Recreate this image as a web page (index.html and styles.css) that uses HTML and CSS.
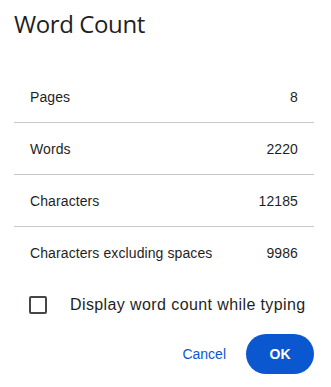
FILE: index.html
```html
<!DOCTYPE html>
<html lang="en">
<head>
    <meta charset="UTF-8">
    <meta name="viewport" content="width=device-width, initial-scale=1.0">
    <title>Word Count</title>
    <link rel="stylesheet" href="styles.css">
</head>
<body>
    <div class="dialog">
        <h1 class="title">Word Count</h1>
        <div class="stats">
            <div class="stat-row">
                <span>Pages</span>
                <span>8</span>
            </div>
            <div class="stat-row">
                <span>Words</span>
                <span>2220</span>
            </div>
            <div class="stat-row">
                <span>Characters</span>
                <span>12185</span>
            </div>
            <div class="stat-row">
                <span>Characters excluding spaces</span>
                <span>9986</span>
            </div>
        </div>
        <label class="option">
            <span class="checkbox"></span>
            <span>Display word count while typing</span>
        </label>
        <div class="actions">
            <button class="text-button">Cancel</button>
            <button class="ok-button">OK</button>
        </div>
    </div>
</body>
</html>
```

FILE: styles.css
```css
body {
    margin: 0;
    background-color: white;
    font-family: "Liberation Sans", Arial, sans-serif;
    color: #1f1f1f;
}
.dialog {
    width: 300px;
    padding: 0 17px 0 14px;
}
.title {
    margin: 0;
    padding-top: 8px;
    height: 63px;
    font-family: "Open Sans", sans-serif;
    font-size: 24px;
    font-weight: 400;
    line-height: 32px;
    letter-spacing: -0.4px;
}
.stat-row {
    display: flex;
    justify-content: space-between;
    align-items: center;
    height: 51px;
    padding: 0 16px;
    font-size: 14px;
    letter-spacing: 0.1px;
    border-bottom: 1px solid #c7c7c7;
}
.stat-row:last-child {
    border-bottom: none;
    height: 52px;
}
.option {
    display: flex;
    align-items: center;
    height: 51px;
    padding-left: 15px;
    font-size: 16px;
    letter-spacing: 0.4px;
}
.checkbox {
    width: 14px;
    height: 14px;
    border: 2px solid #444746;
    border-radius: 2px;
    margin-right: 23px;
}
.actions {
    display: flex;
    justify-content: flex-end;
    align-items: center;
    gap: 8px;
    padding-top: 4px;
}
.text-button,
.ok-button {
    font-family: "Liberation Sans", Arial, sans-serif;
    font-size: 14px;
    font-weight: 700;
    height: 40px;
    border: none;
    border-radius: 20px;
    cursor: pointer;
}
.text-button {
    background: none;
    color: #0b57d0;
    font-weight: 400;
    padding: 0 12px;
}
.ok-button {
    width: 68px;
    background-color: #0b57d0;
    color: white;
}
```
